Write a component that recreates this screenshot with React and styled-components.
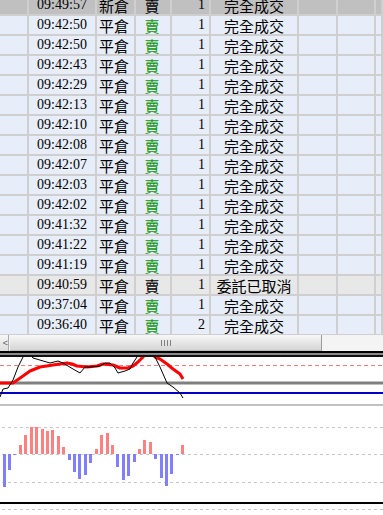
import React from "react";
import styled, { createGlobalStyle } from "styled-components";

const GlobalStyle = createGlobalStyle`
  html, body {
    margin: 0;
    padding: 0;
    background: #ffffff;
    overflow: hidden;
  }
  body {
    font-family: "Liberation Sans", "Noto Sans CJK TC", sans-serif;
  }
`

const ScreenStyled = styled.div`
  width: 383px;
  height: 515px;
  display: flex;
  flex-direction: column;
  overflow: hidden;
  background: #ffffff;
`
const GridViewStyled = styled.div`
  height: 335px;
  overflow: hidden;
  flex-shrink: 0;
`
const RowsStyled = styled.div`
  margin-top: -4px;
  display: flex;
  flex-direction: column;
`
const RowStyled = styled.div`
  display: grid;
  grid-template-columns: 29px 68px 39px 36px 39px 88px 39px 38px 1fr;
  height: 20px;
  background: ${p => p.$bg};
`
const CellStyled = styled.div`
  display: flex;
  align-items: center;
  justify-content: ${p => p.$align || "center"};
  padding: 0 ${p => p.$pad || 0}px 0 ${p => p.$padLeft || 0}px;
  border-right: 2px solid #cfcfcf;
  border-bottom: 2px solid #cfcfcf;
  box-sizing: border-box;
  font-family: ${p => p.$serif ? '"Liberation Serif", "Noto Sans CJK TC", serif' : '"Noto Sans CJK TC", "Liberation Sans", sans-serif'};
  font-size: ${p => p.$serif ? 14 : 15}px;
  line-height: 1;
  color: ${p => p.$color || "#000000"};
  white-space: nowrap;
`

const ScrollBarStyled = styled.div`
  height: 16px;
  flex-shrink: 0;
  display: flex;
  background: #f4f4f4;
`
const ArrowButtonStyled = styled.div`
  width: 8px;
  border-right: 1px solid #a8a8a8;
  background: linear-gradient(#f6f6f6, #dcdcdc);
  display: flex;
  align-items: center;
  justify-content: flex-end;
  font-size: 9px;
  line-height: 1;
  color: #606060;
  overflow: hidden;
`
const ThumbStyled = styled.div`
  width: 311px;
  margin-left: 1px;
  border-right: 1px solid #9a9a9a;
  border-bottom: 1px solid #b8b8b8;
  background: linear-gradient(#f8f8f8, #e6e6e6 50%, #d6d6d6);
  display: flex;
  align-items: center;
  justify-content: center;
  gap: 1px;
`
const GripStyled = styled.span`
  width: 1px;
  height: 6px;
  background: #808080;
  margin-left: 1px;
`

const DividerStyled = styled.div`
  height: 6px;
  flex-shrink: 0;
  border-top: 2px solid #000000;
  border-bottom: 2px solid #111111;
  background: #8a8a8a;
  box-sizing: border-box;
`

const ChartAreaStyled = styled.div`
  display: flex;
  flex-direction: column;
  flex: 1;
`
const PanelSvg = styled.svg`
  display: block;
  flex-shrink: 0;
`

const rows = [
  { time: "09:49:57", kind: "新倉", side: "賣", qty: 1, status: "完全成交", state: "head" },
  { time: "09:42:50", kind: "平倉", side: "賣", qty: 1, status: "完全成交" },
  { time: "09:42:50", kind: "平倉", side: "賣", qty: 1, status: "完全成交" },
  { time: "09:42:43", kind: "平倉", side: "賣", qty: 1, status: "完全成交" },
  { time: "09:42:29", kind: "平倉", side: "賣", qty: 1, status: "完全成交" },
  { time: "09:42:13", kind: "平倉", side: "賣", qty: 1, status: "完全成交" },
  { time: "09:42:10", kind: "平倉", side: "賣", qty: 1, status: "完全成交" },
  { time: "09:42:08", kind: "平倉", side: "賣", qty: 1, status: "完全成交" },
  { time: "09:42:07", kind: "平倉", side: "賣", qty: 1, status: "完全成交" },
  { time: "09:42:03", kind: "平倉", side: "賣", qty: 1, status: "完全成交" },
  { time: "09:42:02", kind: "平倉", side: "賣", qty: 1, status: "完全成交" },
  { time: "09:41:32", kind: "平倉", side: "賣", qty: 1, status: "完全成交" },
  { time: "09:41:22", kind: "平倉", side: "賣", qty: 1, status: "完全成交" },
  { time: "09:41:19", kind: "平倉", side: "賣", qty: 1, status: "完全成交" },
  { time: "09:40:59", kind: "平倉", side: "賣", qty: 1, status: "委託已取消", state: "cancel" },
  { time: "09:37:04", kind: "平倉", side: "賣", qty: 1, status: "完全成交" },
  { time: "09:36:40", kind: "平倉", side: "賣", qty: 2, status: "完全成交" },
];

const rowBg = { head: "#c0c0c0", cancel: "#e8e8e8" };

// upper price panel lines
const redLine = "0,26 13,26 23,19 30,14 40,10 53,8 67,6 72,7 77,9 87,10 97,9 103,7 113,8 120,11 128,11 133,9 138,5 143,0 146,-4";
const redLine2 = "152,-4 155,0 160,2 167,7 173,12 180,17 183,22";
const blackLine = "0,40 3,32 8,31 13,23 18,10 23,0 25,-3";
const blackLine2 = "30,-3 33,1 50,6 58,4 63,6 73,12 80,16 85,10 90,10 100,9 105,6 110,6 115,11 118,16 125,14 130,12 133,6 137,0 138,-3";
const blackLine3 = "154,-3 155,0 160,10 167,26 173,30 180,36 183,41";

// histogram bars: [x, value] (value > 0 up, value < 0 down) around baseline 48
const bars = [
  [3, -33], [8, -16], [13, -1], [19, 9], [24, 19], [30, 27], [35, 27], [41, 25],
  [46, 23], [51, 24], [57, 18], [62, 7], [68, -6], [73, -18], [78, -25], [84, -21],
  [89, -9], [95, 5], [100, 19], [106, 21], [111, 9], [116, -13], [122, -26], [127, -22],
  [133, -8], [138, 5], [143, 14], [149, 12], [154, -5], [160, -24], [165, -32], [170, -20],
  [176, -1], [181, 9],
];

function PricePanel() {
  return (
    <PanelSvg width="383" height="49" viewBox="0 0 383 49">
      <line x1="0" y1="8.5" x2="383" y2="8.5" stroke="#f08080" strokeDasharray="4 3" />
      <line x1="0" y1="26" x2="383" y2="26" stroke="#808080" strokeWidth="3" />
      <line x1="0" y1="36" x2="383" y2="36" stroke="#0000c8" strokeWidth="2" />
      <line x1="0" y1="48" x2="383" y2="48" stroke="#c0c0c0" strokeWidth="2" />
      <polyline points={redLine} fill="none" stroke="#ff0000" strokeWidth="3" strokeLinejoin="round" />
      <polyline points={redLine2} fill="none" stroke="#ff0000" strokeWidth="3" strokeLinejoin="round" />
      <polyline points={blackLine} fill="none" stroke="#000000" strokeWidth="1" />
      <polyline points={blackLine2} fill="none" stroke="#000000" strokeWidth="1" />
      <polyline points={blackLine3} fill="none" stroke="#000000" strokeWidth="1" />
    </PanelSvg>
  );
}

function IndicatorPanel() {
  const dashed = [21, 48, 76, 103];
  return (
    <PanelSvg width="383" height="109" viewBox="0 0 383 109">
      {dashed.map(y => (
        <line key={y} x1="2" y1={y + 0.5} x2="383" y2={y + 0.5} stroke="#c8c8c8" strokeDasharray="3 3" />
      ))}
      <line x1="0" y1="97" x2="383" y2="97" stroke="#000000" strokeWidth="2" />
      {bars.map(([x, v]) => (
        <rect
          key={x}
          x={x}
          y={v > 0 ? 48 - v : 48}
          width="3"
          height={Math.abs(v)}
          fill={v > 0 ? "#ff8080" : "#8080ff"}
        />
      ))}
    </PanelSvg>
  );
}

function App() {
  return (
    <ScreenStyled>
      <GlobalStyle />
      <GridViewStyled>
        <RowsStyled>
          {rows.map((r, i) => {
            const plain = r.state === "head" || r.state === "cancel";
            return (
              <RowStyled key={i} $bg={rowBg[r.state] || "#e8eef9"}>
                <CellStyled />
                <CellStyled $serif>{r.time}</CellStyled>
                <CellStyled $align="flex-start" $padLeft={2}>{r.kind}</CellStyled>
                <CellStyled $color={plain ? "#000000" : "#119611"} $pad={2}>{r.side}</CellStyled>
                <CellStyled $serif $align="flex-end" $pad={4}>{r.qty}</CellStyled>
                <CellStyled>{r.status}</CellStyled>
                <CellStyled />
                <CellStyled />
                <CellStyled />
              </RowStyled>
            );
          })}
        </RowsStyled>
      </GridViewStyled>
      <ScrollBarStyled>
        <ArrowButtonStyled>&lt;</ArrowButtonStyled>
        <ThumbStyled>
          <GripStyled />
          <GripStyled />
          <GripStyled />
          <GripStyled />
        </ThumbStyled>
      </ScrollBarStyled>
      <DividerStyled />
      <ChartAreaStyled>
        <PricePanel />
        <IndicatorPanel />
      </ChartAreaStyled>
    </ScreenStyled>
  );
}

export default App;
